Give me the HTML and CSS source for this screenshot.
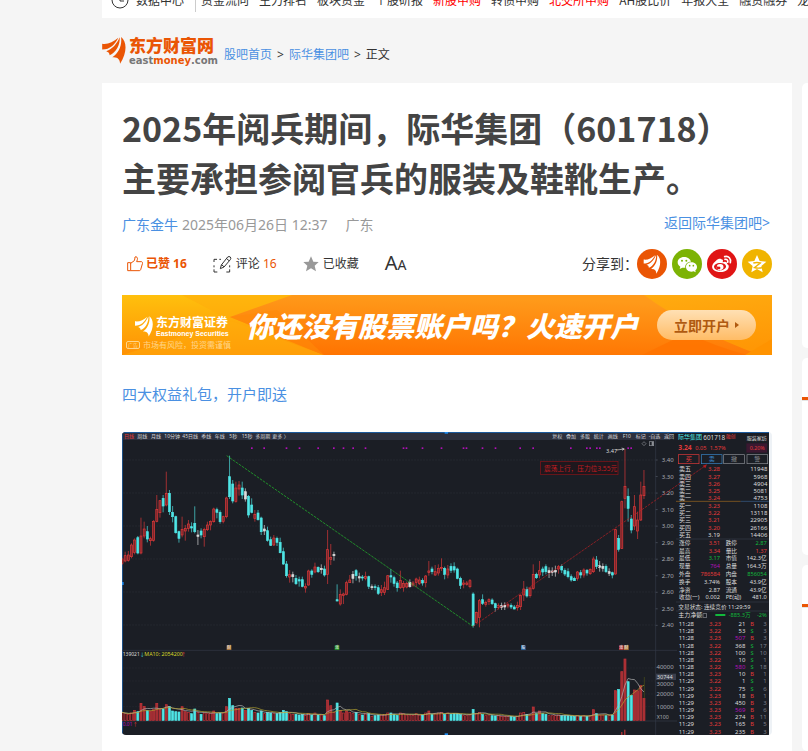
FILE: index.html
```html
<!DOCTYPE html>
<html lang="zh-CN">
<head>
<meta charset="utf-8">
<meta name="viewport" content="width=device-width, initial-scale=1">
<title>2025年阅兵期间，际华集团（601718）</title>
<link rel="stylesheet" href="styles.css">
</head>
<body>
<svg class="defs" aria-hidden="true">
  <symbol id="mark" viewBox="0 0 70 80">
    <path d="M0 20C17 23 32 14 48 2C37 22 24 37 0 37Z"/>
    <path d="M12 42C31 36 43 21 52 1C53 24 42 46 22 54C22 48 19 44 12 42Z"/>
    <path d="M56 0C74 14 74 46 53 79C53 67 46 58 30 60C49 47 59 25 56 0Z"/>
  </symbol>
</svg>

<div class="page">
  <nav class="topnav">
    <svg class="clock" viewBox="0 0 18 18"><circle cx="9" cy="9" r="8"/><path d="M9 4v6h4"/></svg>
    <a class="center" href="#">数据中心</a>
    <a href="#">资金流向</a><a href="#">主力排名</a><a href="#">板块资金</a><a href="#">个股研报</a><a class="hot" href="#">新股申购</a><a href="#">转债申购</a><a class="hot" href="#">北交所申购</a><a href="#">AH股比价</a><a href="#">年报大全</a><a href="#">融资融券</a><a href="#">龙虎榜单</a>
  </nav>

  <header class="crumbs">
    <a class="logo" href="#">
      <svg class="logo-mark"><use href="#mark"/></svg>
      <span class="logo-text"><span class="logo-cn">东方财富网</span><span class="logo-en">east<b>money</b>.com</span></span>
    </a>
    <p class="trail"><a href="#">股吧首页</a><i>&gt;</i><a href="#">际华集团吧</a><i>&gt;</i><span>正文</span></p>
  </header>

  <div class="columns">
    <main class="article">
      <h1>2025年阅兵期间，际华集团（601718）主要承担参阅官兵的服装及鞋靴生产。</h1>
      <div class="meta">
        <a href="#">广东金牛</a><time>2025年06月26日 12:37</time><span class="place">广东</span>
        <a class="back" href="#">返回际华集团吧&gt;</a>
      </div>
      <div class="actions">
        <button class="liked" type="button">
          <svg width="16" height="16" viewBox="0 0 48 48"><path d="M2 20h9v24H2zM11 22L22 14C24 11 23 7 24 3C28 0 33 5 31 11L29 17H44C47 18 47 22 46 24L41 41C40 43 39 44 37 44H11"/></svg>
          <span>已赞 16</span>
        </button>
        <button class="comment" type="button">
          <svg width="19" height="18" viewBox="0 0 57 54"><path d="M12 13H3v8M3 31v6M3 43v8h10M40 51h10v-8M50 37v-6M19 13h5"/><path d="M22 41L25 30L44 6Q48 3 52 6Q55 10 52 14L33 36ZM40 10L48 17M25 30Q31 31 33 36"/></svg>
          <span>评论 <em>16</em></span>
        </button>
        <button class="fav" type="button">
          <svg width="16" height="16" viewBox="0 0 48 48"><path d="M24 1L31 17L47 18L35 29L39 46L24 37L9 46L13 29L1 18L17 17Z"/></svg>
          <span>已收藏</span>
        </button>
        <button class="size" type="button" aria-label="字号">A<small>A</small></button>
        <div class="share">
          <span>分享到：</span>
          <a class="em" href="#" aria-label="东方财富"><svg viewBox="0 0 90 90"><use href="#mark" x="19" y="17" width="52" height="58"/></svg></a>
          <a class="wx" href="#" aria-label="微信"><svg viewBox="0 0 90 90">
            <path d="M36 24C25 24 17 31 17 40C17 46 20 50 25 53L23 60L31 56Q36 57 40 56C38 46 46 38 57 38C55 30 46 24 36 24Z"/>
            <path d="M58 40C49 40 42 46 42 54C42 62 49 68 58 68Q62 68 65 67L71 70L70 64C73 62 75 58 75 54C75 46 67 40 58 40Z"/>
            <g fill="#7cb305"><circle cx="30" cy="35" r="3"/><circle cx="43" cy="35" r="3"/><circle cx="53" cy="50" r="2.500"/><circle cx="64" cy="50" r="2.500"/></g></svg></a>
          <a class="wb" href="#" aria-label="微博"><svg viewBox="0 0 90 90">
            <path fill-rule="evenodd" d="M43 31C48 31 49 35 47 40C54 37 61 38 60 45C67 48 67 56 61 62C52 71 31 72 20 63C11 54 16 44 27 35C33 30 39 28 43 31ZM40 42C28 42 21 48 21 54C22 61 31 65 41 64C51 63 58 57 57 51C56 45 49 42 40 42Z"/>
            <path fill-rule="evenodd" d="M39 45A10 9 0 1 0 40 63A10 9 0 1 0 39 45ZM35 53A4 4 0 1 1 34 60A4 4 0 1 1 35 53Z"/>
            <path class="wave" d="M53 23C65 20 73 29 70 41M54 31C60 30 64 34 62 40"/></svg></a>
          <a class="qz" href="#" aria-label="QQ空间"><svg viewBox="0 0 90 90"><path d="M45 18L53 36L73 38L58 51L62 70L45 60L28 70L32 51L17 38L37 36Z"/><path class="zed" d="M34 42Q45 39 55 42L37 56Q48 59 62 56"/></svg></a>
        </div>
      </div>

      <a class="banner" href="#">
        <svg class="banner-bg" viewBox="0 0 650 60" preserveAspectRatio="none" aria-hidden="true">
          <defs>
            <linearGradient id="g1" x1="0" y1="0" x2="0" y2="1"><stop offset="0" stop-color="#ffc00d"/><stop offset="1" stop-color="#ff9104"/></linearGradient>
            <linearGradient id="g2" x1="0.200" y1="0" x2="0" y2="1"><stop offset="0" stop-color="#ff9a1a"/><stop offset="1" stop-color="#ff7200"/></linearGradient>
            <linearGradient id="g3" x1="0" y1="0" x2="0.200" y2="1"><stop offset="0" stop-color="#ffab10"/><stop offset="1" stop-color="#ff9705"/></linearGradient>
          </defs>
          <path fill="url(#g1)" d="M0 0H650V60H0Z"/>
          <path fill="#ffab0c" opacity=".5" d="M60 0H170L110 26ZM0 60L110 26L202 60Z"/>
          <path fill="url(#g2)" d="M170 0H525Q570 35 640 60H202L108 22Z"/>
          <path fill="#ff8a08" opacity=".6" d="M108 22L155 15L202 60Z"/>
          <path fill="url(#g3)" d="M522 0H650V60H638Q570 35 522 0Z"/>
          <path fill="#ff7300" opacity=".8" d="M520 60L565 38Q595 52 625 60Z"/>
          <path fill="#ff9300" d="M623 60L650 44V60Z"/>
        </svg>
        <span class="sec">
          <span class="sec-brand"><svg class="sec-mark"><use href="#mark"/></svg><span class="sec-names"><b>东方财富证券</b><i>Eastmoney Securities</i></span></span>
          <span class="risk"><span class="tag">广告</span>市场有风险，投资需谨慎</span>
        </span>
        <strong>你还没有股票账户吗？火速开户</strong>
        <span class="cta">立即开户<span class="tri"></span></span>
      </a>

      <p class="gift"><a href="#">四大权益礼包，开户即送</a></p>

      <svg class="chart" id="chart" viewBox="0 0 1950 909" role="img" aria-label="际华集团日线图">
        <rect width="1950" height="909" fill="#eef2f6"/>
        <rect width="1941" height="909" fill="#1b1e25"/>
        <rect width="1645" height="22" y="2" fill="#2c303e"/>
        <rect width="1941" height="3" fill="#1c5a9c"/>
        <rect width="3" height="909" fill="#1c4f85"/>
        <rect x="968" y="0" width="10" height="5" fill="#1e8cf0"/><rect x="968" y="904" width="10" height="5" fill="#1e8cf0"/>
        <rect x="0" y="450" width="5" height="9" fill="#1e8cf0"/>
      </svg>
    </main>

    <aside class="side">
      <section class="card first"></section>
      <section class="card second"><div class="card-head"></div></section>
      <section class="card last"><div class="card-head"></div></section>
    </aside>
  </div>
</div>
<script src="chart.js"></script>
</body>
</html>
```

FILE: styles.css
```css
* { box-sizing: border-box; }

body {
  margin: 0;
  background: #f5f5f5;
  color: #333;
  font: 12px/18px "Noto Sans", "Noto Sans CJK SC", sans-serif;
  overflow: hidden;
  height: 100vh;
}

a { color: #4a90e2; text-decoration: none; }
h1, p { margin: 0; }
.defs { position: absolute; width: 0; height: 0; }

.page { padding-left: 102px; }

/* top navigation, partly scrolled out of view */
.topnav {
  display: flex;
  align-items: center;
  gap: 10px;
  height: 36px;
  margin-top: -18px;
  padding-left: 9px;
  background: #fff;
  overflow: hidden;
  white-space: nowrap;
  font-family: "Noto Sans CJK SC", sans-serif;
}
.topnav a { color: #333; flex: none; }
.topnav a.hot { color: #f00; }
.topnav a.center {
  padding-right: 11px;
  margin-right: -5px;
  margin-left: -3px;
  border-right: 1px solid #ccc;
  line-height: 24px;
}
.clock { width: 18px; height: 18px; flex: none; fill: none; stroke: #333; stroke-width: 1; }

.crumbs {
  display: flex;
  align-items: center;
  gap: 9px;
  height: 65px;
}
.logo { display: flex; align-items: center; gap: 3px; }
.logo-mark { width: 24px; height: 27px; fill: #ea5504; }
.logo-text { display: flex; flex-direction: column; width: 86px; }
.logo-cn { color: #ea5504; font: 900 17px/20px "Noto Sans CJK SC", sans-serif; }
.logo-en { color: #777; font: bold 10px/12px "DejaVu Sans", sans-serif; }
.logo-en b { color: #ea5504; }
.trail { padding-top: 8px; }
.trail i { margin: 0 5px; font-style: normal; }

.columns {
  display: grid;
  grid-template-columns: minmax(0, 1fr) 6px;
  gap: 10px;
  align-items: start;
}
.article { background: #fff; padding: 20px; min-height: 668px; }

h1 { padding-right: 20px; color: #444; font: bold 34px/50px "Noto Sans CJK SC", sans-serif; }

.meta {
  display: flex;
  align-items: center;
  height: 20px;
  margin-top: 12px;
  font-size: 14px;
  color: #999;
}
.meta time { margin-left: 4px; }
.place { margin-left: 18px; }
.back { margin-left: auto; padding: 0 2px 4px 0; }

.actions {
  display: flex;
  align-items: center;
  gap: 26px;
  height: 30px;
  margin-top: 14px;
  padding-left: 5px;
}
.actions button {
  display: flex;
  align-items: center;
  gap: 4px;
  padding: 0;
  border: 0;
  background: none;
  color: #333;
  font: inherit;
  white-space: nowrap;
}
.actions svg { fill: none; stroke: #333; stroke-width: 3; }
.actions .liked { color: #ea5504; font-weight: bold; gap: 3px; }
.actions .liked svg { stroke: #ea5504; }
.actions em { font-style: normal; color: #ea5504; }
.actions .fav svg { fill: #999; stroke: none; }
.actions .size { font-size: 20px; align-items: baseline; gap: 0; }
.size small { font-size: 14px; }

.share { display: flex; align-items: center; gap: 5px; margin-left: auto; font-size: 14px; white-space: nowrap; }
.share span { margin-right: -6px; }
.share a { width: 30px; height: 30px; border-radius: 50%; }
.share a svg { display: block; width: 30px; height: 30px; fill: #fff; stroke: none; }
.em { background: #ea5504; }
.wx { background: #7cb305; }
.wb { background: #e01515; }
.qz { background: #f0b400; }
.share .wave { fill: none; stroke: #fff; stroke-width: 5; stroke-linecap: round; }
.share .zed { fill: none; stroke: #f0b400; stroke-width: 4; }

.banner {
  position: relative;
  display: flex;
  align-items: center;
  height: 60px;
  margin-top: 16px;
  overflow: hidden;
  color: #fff;
  font-family: "Noto Sans CJK SC", sans-serif;
  white-space: nowrap;
}
.banner-bg { position: absolute; inset: 0; width: 100%; height: 100%; }
.banner > span, .banner > strong { position: relative; }
.sec { width: 124px; padding: 16px 0 0 4px; }
.sec-brand { display: flex; align-items: center; gap: 3px; padding-left: 9px; }
.sec-mark { width: 18px; height: 21px; fill: #fff; }
.sec-names { display: flex; flex-direction: column; }
.sec-names b { font-size: 12px; line-height: 14px; }
.sec-names i { font: bold 7px/9px "Liberation Sans", sans-serif; }
.risk { display: flex; align-items: center; gap: 3px; font-size: 8px; line-height: 14px; color: #ffd58a; }
.tag { width: 14px; height: 8px; border: 1px solid #ffd58a; border-radius: 2px; font-size: 5px; line-height: 6px; text-align: center; }
.banner strong { font-size: 28px; line-height: 40px; font-weight: 900; font-style: italic; }
.cta {
  display: flex;
  align-items: center;
  justify-content: center;
  gap: 5px;
  width: 99px;
  height: 30px;
  margin-left: auto;
  margin-right: 16px;
  border-radius: 15px;
  background: linear-gradient(#ffe0b4, #ffbc66);
  color: #b05a10;
  font-size: 14px;
  font-weight: bold;
}
.tri { border-left: 4px solid #b05a10; border-top: 3px solid transparent; border-bottom: 3px solid transparent; }

.gift { margin-top: 24px; font-size: 15px; line-height: 30px; }
.chart {
  display: block;
  width: 100%;
  height: auto;
  margin-top: 23px;
  border-radius: 4px;
  font-family: "Noto Sans", "Noto Sans CJK SC", sans-serif;
}

.side { display: flex; flex-direction: column; gap: 10px; }
.card { background: #fff; border-radius: 5px 0 0 5px; }
.card.first { height: 265px; }
.card.second { height: 197px; }
.card.last { height: 186px; }
.card-head { height: 42px; border-bottom: 3px solid #ea5504; box-shadow: 0 1px #e5e5e5; }
```

FILE: chart.js
```js
const svg = document.getElementById('chart');
const RED = '#e23a3a', CYAN = '#4fe6e6', GREEN = '#12b83c', WHITE = '#dcdcdc', PURPLE = '#b010b8', GRAY = '#8c8f96';
const STEP = 9.49;

function add(tag, attrs, text) {
  const el = document.createElementNS('http://www.w3.org/2000/svg', tag);
  for (const k in attrs) el.setAttribute(k, attrs[k]);
  if (text !== undefined) el.textContent = text;
  svg.appendChild(el);
  return el;
}
// y is the vertical middle of the line of text
function label(x, y, text, fill, anchor, size) {
  const s = size || 18;
  add('text', { x, y: y + Math.round(s * 0.36), fill: fill || WHITE, 'text-anchor': anchor || 'start', 'font-size': s }, text);
}
function line(x1, y1, x2, y2, stroke, dash) {
  add('line', { x1, y1, x2, y2, stroke, 'stroke-width': 2, 'stroke-dasharray': dash || 'none' });
}
function box(x, y, width, height, fill, stroke) {
  add('rect', { x, y, width, height, fill, stroke: stroke || 'none', 'stroke-width': 2 });
}

// grid and axes
for (let i = 0; i < 6; i++) line(4, 84 + i * 99, 1600, 84 + i * 99, '#30343c', '4 5');
[708, 747, 786, 824].forEach(y => line(4, y, 1600, y, '#2a2e36', '4 5'));
line(1601, 24, 1601, 909, '#343a48');
line(0, 655, 1665, 655, '#343a48');
line(0, 867, 1665, 867, '#343a48');
for (let i = 0; i < 11; i++) {
  label(1655, 84 + i * 49.6, (3.4 - i * 0.1).toFixed(2), '#a8abb2', 'end', 18);
  line(1601, 84 + i * 49.6, 1607, 84 + i * 49.6, '#555b68');
}
[['40000', 706], ['30000', 756], ['20000', 786], ['10000', 824]].forEach(r => label(1655, r[1], r[0], '#a8abb2', 'end', 18));
box(1602, 725, 60, 19, '#3a3f4d');
label(1604, 734, '30744', WHITE, 'start', 17);
label(1604, 855, 'X100', '#a8abb2', 'start', 16);

// toolbar
[['日线', 6], ['周线', 46], ['月线', 87], ['10分钟', 127], ['45日线', 181], ['季线', 238], ['年线', 278], ['5秒', 322], ['15秒', 359], ['多周期', 400], ['更多 〉', 451],
 ['复权', 1291], ['叠加', 1332], ['多股', 1374], ['统计', 1415], ['画线', 1457], ['F10', 1502], ['标记', 1541], ['-自选', 1580], ['返回', 1626]]
  .forEach((t, i) => label(t[1], 12, t[0], i ? '#d4d6dc' : RED, 'start', 15));

[389, 426, 493, 532, 588, 635, 664, 693, 730, 844, 853, 901, 958, 1024, 1033, 1081, 1120, 1194, 1233, 1346, 1394, 1404, 1424, 1433, 1518, 1527]
  .forEach(x => box(x - 2, 46, 5, 5, PURPLE));

// candles: kind, high, body top, body bottom, low
const candles = `r398,402,415,420 r380,392,408,412 r378,390,406,410 r355,360,395,400 r340,345,382,388 c333,338,384,388 r278,333,384,388 r290,312,333,340 c303,320,342,352 r335,341,347,362
r285,289,346,350 r210,253,289,292 r225,227,263,278 c210,220,243,262 r140,205,240,244 c195,205,260,270 c243,262,275,292 c272,275,323,326 c317,320,340,353 r275,313,330,337
r300,310,318,347 r285,297,310,320 c292,305,309,322 c244,295,320,325 w315,330,334,360 c310,318,330,340 r308,313,335,365 r290,300,314,318 r286,289,300,316 r248,252,290,293
c248,254,262,280 c256,262,290,296 r272,275,289,295 r215,219,275,280 c92,155,215,222 c165,177,228,235 r170,189,229,233 r168,180,192,212 c170,189,210,222 w190,200,222,230
c210,214,270,278 c220,240,262,265 r255,268,280,290 c255,264,284,287 c275,279,320,330 w300,312,318,330 c305,317,346,350 c335,344,361,363 r330,339,360,363 c335,340,352,363
c338,352,383,385 c368,380,417,420 c408,417,452,458 r435,449,456,473 w440,449,455,472 c450,460,476,480 c455,464,468,485 c455,464,484,487 r475,484,489,503 r434,438,480,482
c433,438,448,458 r413,426,441,445 c424,427,440,444 w418,430,434,446 c422,432,450,455 r315,374,448,477 r357,397,403,420 w380,388,392,407 c478,524,528,529 r493,508,537,542
r503,507,511,537 r467,473,508,511 r450,465,473,474 w438,448,460,475 c432,437,452,467 w443,455,459,472 c450,456,459,467 r440,454,460,466 c452,455,484,492 w478,485,488,495
c478,485,488,496 c480,488,505,510 r480,494,502,513 r470,488,502,510 r450,452,493,495 c432,452,456,473 c452,458,475,485 c468,474,488,500 r437,466,488,492 r468,475,487,500
r470,475,486,490 w463,472,485,488 r468,474,480,485 r458,462,472,487 r455,465,475,480 c460,466,474,482 r450,453,473,487 r408,438,442,452 c425,432,440,448 r420,440,450,453
r418,430,444,452 r400,427,430,438 c425,430,448,463 r420,432,450,460 c415,424,436,444 c412,425,435,443 c428,432,460,463 c455,460,481,492 r465,474,478,490 r468,474,478,482
r462,467,485,490 c502,507,602,608 r560,562,592,595 r522,527,577,607 c508,524,535,540 r527,532,538,545 r520,524,530,540 c520,525,536,540 c533,536,548,560 r535,542,547,553
w533,542,547,555 w532,541,546,555 r534,539,543,550 c535,541,546,552 c540,546,552,553 r530,541,548,557 r508,511,545,555 r468,492,510,528 c485,493,513,518 r487,489,512,518
r418,448,490,494 c443,448,458,462 r408,437,450,460 c425,432,441,453 c418,425,440,448 w427,437,443,459 w427,438,442,453 w422,436,441,455 r420,425,432,446 c418,424,435,444
c430,436,447,453 c430,440,455,460 c448,455,465,470 c455,460,467,468 r438,441,460,467 c435,443,450,460 r430,435,450,458 c432,436,444,452 r430,433,446,450 r395,402,440,444
c393,405,424,432 w408,422,427,440 w415,424,430,440 c418,424,440,444 w430,440,445,453 c440,443,450,460 r312,314,447,449 c330,340,373,380 r227,230,370,372 r72,184,220,250
c190,214,250,290 c270,282,315,325 r210,245,303,315 r260,285,318,342 r170,210,285,288 r135,184,212,222`.split(/\s+/);

const volumes = [24,20,18,22,30,26,51,42,29,28,32,51,34,34,47,41,28,26,25,41,26,24,20,34,24,18,22,20,22,28,20,22,22,41,66,44,36,36,37,30,
36,30,24,22,28,20,24,22,20,20,24,30,26,20,18,18,16,18,15,20,16,22,16,16,14,61,44,24,52,30,22,28,24,20,24,18,16,20,20,12,
14,16,16,18,22,22,18,15,22,20,16,16,15,20,16,16,22,28,18,20,22,24,18,22,18,20,20,18,14,14,18,33,20,24,18,14,16,14,13,14,
12,12,12,12,10,12,22,24,18,18,40,20,28,20,18,14,14,14,16,14,14,14,13,12,14,12,14,12,14,32,20,16,16,14,14,16,89,93,146,184,116,75,91,89,104,66];

const DY = -21, BASE = 865;
candles.forEach((c, i) => {
  const color = c[0] === 'r' ? RED : c[0] === 'c' ? CYAN : WHITE;
  const [hi, top, bottom, lo] = c.slice(1).split(',').map(v => +v + DY);
  const x = STEP * i;
  line(x, hi, x, lo, color);
  const down = c[0] === 'c';
  box(x - 3, top, 6, Math.max(2, bottom - top), down ? CYAN : c[0] === 'r' ? '#7a262b' : WHITE, color);
  const big = volumes[i] > 25;
  box(x - 3, BASE - volumes[i], 6, volumes[i], down ? CYAN : big ? '#a03034' : '#40191d', down ? CYAN : '#c83238');
});
line(1567, 735, 1567, 799, '#4d5218');

// volume averages
function average(n, color) {
  const pts = volumes.map((v, i) => {
    const part = volumes.slice(Math.max(0, i - n + 1), i + 1);
    return (STEP * i).toFixed(1) + ',' + (BASE - part.reduce((a, b) => a + b, 0) / part.length).toFixed(1);
  });
  add('polyline', { points: pts.join(' '), fill: 'none', stroke: color, 'stroke-width': 2 });
}
average(5, '#b8b8b8');
average(10, '#b8a830');

// trend lines and annotation
line(314, 71, 1053, 583, '#24c42e', '8 3');
line(1053, 583, 1752, 100, '#c02024', '8 3');
add('path', { d: 'M1742 101L1755 97L1750 109Z', fill: '#b01c20' });
box(1256, 88, 232, 40, '#1f171d', '#8a1418');
label(1266, 109, '震荡上行，压力位3.55元', '#c01c20', 'start', 20);
label(1452, 57, '3.47', WHITE, 'start', 17);
line(1484, 54, 1506, 51, WHITE);
add('path', { d: 'M1499 48L1507 51L1500 55', fill: 'none', stroke: WHITE, 'stroke-width': 2 });
add('path', { d: 'M1566 29l6 6-6 6-6-6z', fill: 'none', stroke: GRAY, 'stroke-width': 2 });
box(1582, 29, 13, 12, 'none', GRAY);
box(1589, 29, 6, 12, GRAY);

[[314, '#a8743a', '财'], [638, '#228b22', '涨'], [1197, '#225a94', '股'], [1491, '#a83030', '涨'], [1506, '#a8743a', '财']].forEach(b => {
  box(b[0], 640, 14, 14, b[1]);
  label(b[0] + 1, 647, b[2], '#fff', 'start', 12);
});
label(2, 667, '139021', WHITE, 'start', 15);
label(53, 667, '↓', CYAN, 'start', 15);
label(67, 667, 'MA10: 2054200', '#d8d828', 'start', 16);
label(177, 667, '↑', RED, 'start', 15);
label(2, 877, '0.01', PURPLE, 'start', 15);
label(32, 877, '↑', RED, 'start', 15);
box(1498, 900, 3, 9, RED);
box(1507, 893, 3, 16, RED);

// quote panel
label(1668, 16, '际华集团', CYAN, 'start', 18);
label(1744, 16, '601718', WHITE, 'start', 19);
label(1812, 13, '融创', RED, 'start', 14);
label(1934, 18, '服装家纺', WHITE, 'end', 15);
box(1873, 34, 62, 28, '#3a1830');
label(1928, 48, '0.20%', RED, 'end', 16);
add('text', { x: 1669, y: 54, fill: RED, 'font-size': 20, 'font-weight': 'bold' }, '3.24');
label(1720, 47, '0.05', RED, 'start', 17);
label(1763, 47, '1.57%', RED, 'start', 17);
[['买', 1669, RED], ['卖', 1738, '#3a86c8'], ['撤', 1805, GRAY], ['警', 1875, GRAY]].forEach(b => {
  box(b[1], 68, 62, 27, 'none', b[2]);
  label(b[1] + 31, 81, b[0], b[2], 'middle', 18);
});
const book = [['卖五', '3.28', '11948', 112], ['卖四', '3.27', '5968', 134], ['卖三', '3.26', '4904', 156], ['卖二', '3.25', '5081', 177], ['卖一', '3.24', '4753', 198],
  ['买一', '3.23', '1108', 223], ['买二', '3.22', '13118', 244], ['买三', '3.21', '22905', 265], ['买四', '3.20', '26166', 287], ['买五', '3.19', '14406', 308]];
book.forEach((r, i) => {
  label(1671, r[3], r[0]);
  label(1794, r[3], r[1], i === 9 ? WHITE : RED, 'end');
  label(1936, r[3], r[2], WHITE, 'end');
});
line(1662, 208, 1856, 208, '#a06a20');
line(1856, 208, 1940, 208, '#3a6090');
line(1662, 321, 1940, 321, '#343a48');
[['涨停', '3.51', RED, '跌停', '2.87', GREEN, 334], ['最高', '3.34', RED, '量比', '1.37', RED, 356], ['最低', '3.17', GREEN, '市值', '142.3亿', WHITE, 379],
 ['现量', '764', PURPLE, '总量', '164.3万', WHITE, 401], ['外盘', '786584', RED, '内盘', '856054', GREEN, 425], ['换手', '3.74%', WHITE, '股本', '43.9亿', WHITE, 449],
 ['净资', '2.87', WHITE, '流通', '43.9亿', WHITE, 473], ['收益(一)', '0.002', WHITE, 'PE(动)', '481.0', WHITE, 496]].forEach(r => {
  label(1671, r[6], r[0], WHITE, 'start', 17);
  label(1794, r[6], r[1], r[2], 'end', 17);
  label(1811, r[6], r[3], WHITE, 'start', 17);
  label(1934, r[6], r[4], r[5], 'end', 17);
});
line(1662, 510, 1940, 510, '#343a48');
label(1669, 524, '交易状态: 连续竞价 11:29:59', WHITE, 'start', 17);
line(1662, 537, 1940, 537, '#343a48');
label(1669, 550, '主力净额', WHITE, 'start', 18);
box(1743, 545, 11, 11, 'none', GRAY);
box(1780, 546, 30, 6, GREEN);
label(1886, 550, '-885.3万', GREEN, 'end', 17);
label(1934, 550, '-2%', GREEN, 'end', 17);
`11:28 3.23 21 B 3
11:28 3.22 53 S 3
11:28 3.23 507 B 3
11:28 3.22 368 S 17
11:28 3.22 100 S 10
11:28 3.22 10 S 1
11:28 3.22 580 S 18
11:28 3.23 10 B 1
11:29 3.22 1 S 1
11:29 3.22 75 S 6
11:29 3.23 18 B 1
11:29 3.23 450 B 3
11:29 3.23 569 B 6
11:29 3.23 274 B 11
11:29 3.23 165 B 5
11:29 3.23 235 B 3`.split('\n').forEach((row, i) => {
  const [time, price, qty, side, n] = row.split(' ');
  const y = 576 + i * 21.5;
  label(1670, y, time);
  label(1797, y, price, RED, 'end');
  label(1870, y, qty, +qty > 500 ? PURPLE : WHITE, 'end');
  label(1890, y, side, side === 'B' ? RED : GREEN, 'middle', 17);
  label(1934, y, n, '#7c7f88', 'end');
});
```
